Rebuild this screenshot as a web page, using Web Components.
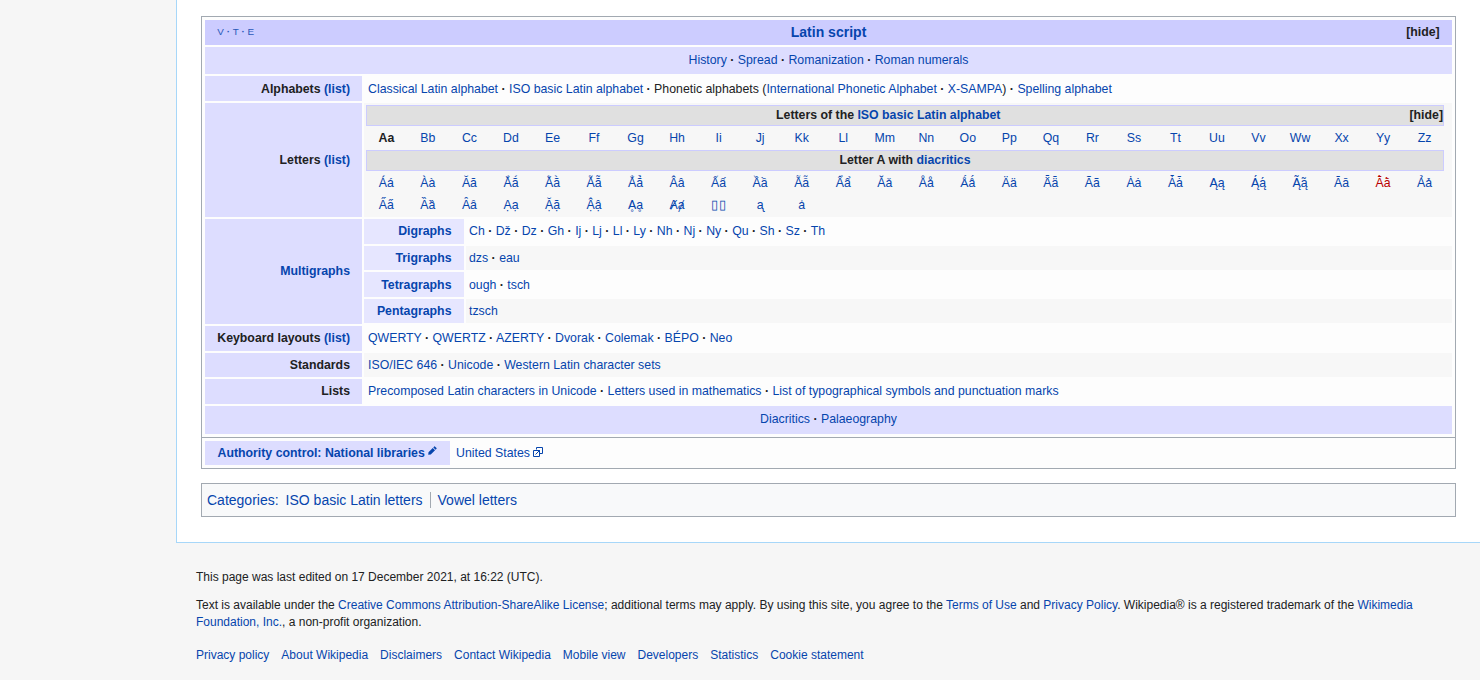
<!DOCTYPE html>
<html lang="en"><head><meta charset="utf-8"><title>Latin script</title>
<style>
html,body{margin:0;padding:0;background:#f6f6f6}
body{font-family:"Liberation Sans",Arial,sans-serif;color:#202122;width:1480px;height:680px;overflow:hidden}
a{color:#0645ad;text-decoration:none}
a.new{color:#ba0000}
b.d{color:#202122}
</style></head><body>
<wiki-page>
  <nav-box>
    <nav-title heading="Latin script"></nav-title>
    <nav-band><a>History</a> <b class="d">·</b> <a>Spread</a> <b class="d">·</b> <a>Romanization</a> <b class="d">·</b> <a>Roman numerals</a></nav-band>
    <nav-row nudge><span slot="label">Alphabets <a>(list)</a></span><a style="color:#0645ad">Classical Latin alphabet</a> <b class="d">·</b> <a>ISO basic Latin alphabet</a> <b class="d">·</b> Phonetic alphabets (<a>International Phonetic Alphabet</a> <b class="d">·</b> <a>X-SAMPA</a>) <b class="d">·</b> <a>Spelling alphabet</a></nav-row>
    <nav-row flush shade><span slot="label">Letters <a>(list)</a></span>
      <sub-head hide>Letters of the <a>ISO basic Latin alphabet</a></sub-head>
      <letter-grid id="basic"></letter-grid>
      <sub-head>Letter A with <a>diacritics</a></sub-head>
      <letter-grid id="dia" tight></letter-grid>
    </nav-row>
    <nav-row flush nested><span slot="label"><a>Multigraphs</a></span>
      <sub-row><a slot="label">Digraphs</a><a>Ch</a> <b class="d">·</b> <a>Dž</a> <b class="d">·</b> <a>Dz</a> <b class="d">·</b> <a>Gh</a> <b class="d">·</b> <a>Ij</a> <b class="d">·</b> <a>Lj</a> <b class="d">·</b> <a>Ll</a> <b class="d">·</b> <a>Ly</a> <b class="d">·</b> <a>Nh</a> <b class="d">·</b> <a>Nj</a> <b class="d">·</b> <a>Ny</a> <b class="d">·</b> <a>Qu</a> <b class="d">·</b> <a>Sh</a> <b class="d">·</b> <a>Sz</a> <b class="d">·</b> <a>Th</a></sub-row>
      <sub-row shade><a slot="label">Trigraphs</a><a>dzs</a> <b class="d">·</b> <a>eau</a></sub-row>
      <sub-row><a slot="label">Tetragraphs</a><a>ough</a> <b class="d">·</b> <a>tsch</a></sub-row>
      <sub-row shade><a slot="label">Pentagraphs</a><a>tzsch</a></sub-row>
    </nav-row>
    <nav-row><span slot="label">Keyboard layouts <a>(list)</a></span><a>QWERTY</a> <b class="d">·</b> <a>QWERTZ</a> <b class="d">·</b> <a>AZERTY</a> <b class="d">·</b> <a>Dvorak</a> <b class="d">·</b> <a>Colemak</a> <b class="d">·</b> <a>BÉPO</a> <b class="d">·</b> <a>Neo</a></nav-row>
    <nav-row shade><span slot="label">Standards</span><a>ISO/IEC 646</a> <b class="d">·</b> <a>Unicode</a> <b class="d">·</b> <a>Western Latin character sets</a></nav-row>
    <nav-row><span slot="label">Lists</span><a>Precomposed Latin characters in Unicode</a> <b class="d">·</b> <a>Letters used in mathematics</a> <b class="d">·</b> <a>List of typographical symbols and punctuation marks</a></nav-row>
    <nav-band below><a>Diacritics</a> <b class="d">·</b> <a>Palaeography</a></nav-band>
  </nav-box>
  <nav-box second><authority-row><a>United States</a></authority-row></nav-box>
  <cat-links><a>ISO basic Latin letters</a><a>Vowel letters</a></cat-links>
  <wiki-footer slot="footer">
    <p>This page was last edited on 17 December 2021, at 16:22 (UTC).</p>
    <p style="margin-top:11px">Text is available under the <a>Creative Commons Attribution-ShareAlike License</a>; additional terms may apply. By using this site, you agree to the <a>Terms of Use</a> and <a>Privacy Policy</a>. Wikipedia® is a registered trademark of the <a>Wikimedia</a></p>
    <p><a>Foundation, Inc.</a>, a non-profit organization.</p>
    <footer-links><a>Privacy policy</a><a>About Wikipedia</a><a>Disclaimers</a><a>Contact Wikipedia</a><a>Mobile view</a><a>Developers</a><a>Statistics</a><a>Cookie statement</a></footer-links>
  </wiki-footer>
</wiki-page>
<script>
function def(name, css, html, extra){
  customElements.define(name, class extends HTMLElement{
    constructor(){super();this.attachShadow({mode:'open'}).innerHTML='<style>'+css+'</style>'+html;}
    connectedCallback(){ if(extra) extra.call(this); }
  });
}
def('wiki-page',
 `:host{display:block}
  .content{margin-left:176px;border-left:1px solid #a7d7f9;border-bottom:1px solid #a7d7f9;background:#fff;padding:16px 24px 24px 24px;height:502px;box-sizing:content-box}`,
 `<div class="content"><slot></slot></div><slot name="footer"></slot>`);
def('nav-box',
 `:host{display:flex;flex-direction:column;gap:2px;border:1px solid #a2a9b1;background:#fdfdfd;padding:3px;font-size:12.32px;line-height:18.48px}
  :host([second]){margin-top:-1px}`,
 `<slot></slot>`);
def('nav-title',
 `:host{display:flex;height:24.64px;background:#ccf;align-items:center;padding:0 12.32px}
  .v,.h{width:74px;flex:none}
  .v{font-size:9.86px;color:#0645ad;opacity:.85}
  .t{flex:1;text-align:center;font-size:14.04px;font-weight:bold;color:#0645ad}
  .h{text-align:right;font-weight:bold;color:#202122}`,
 `<span class="v">V<b> · </b>T<b> · </b>E</span><span class="t"></span><span class="h">[hide]</span>`,
 function(){this.shadowRoot.querySelector('.t').textContent=this.getAttribute('heading');});
def('nav-band',
 `:host{display:flex;justify-content:center;align-items:center;height:27.76px;background:#ddf;white-space:pre-wrap;text-align:center}
  :host([below]){height:28px;box-sizing:border-box;padding-bottom:1.2px}
  div{text-align:center}`,
 `<div><slot></slot></div>`);
def('nav-row',
 `:host{display:flex;min-height:24.64px}
  .g{flex:none;box-sizing:border-box;width:157px;background:#ddf;display:flex;align-items:center;justify-content:flex-end;padding:0 12px;font-weight:bold;text-align:right}
  .l{flex:1;margin-left:2px;padding:3.08px 0 3.08px 4px;display:block;min-width:0}
  :host([nudge]) .l{padding-top:4px;padding-bottom:2.16px}
  :host([nudge]) .g{padding-top:1px}
  :host([shade]) .l{background:#f7f7f7}
  :host([flush]) .l{padding:2px 8px 1px 2px}
  :host([nested]) .l{padding:0 0 .55px;display:flex;flex-direction:column;gap:2px}`,
 `<div class="g"><slot name="label"></slot></div><div class="l"><slot></slot></div>`);
def('sub-head',
 `:host{display:flex;height:19px;border:1px solid #ccf;background:#e0e0e0;font-weight:bold;align-items:center}
  .t{flex:1;text-align:center}
  .h{display:none;color:#202122}
  :host([hide]) .h{display:block}`,
 `<span class="t"><slot></slot></span><span class="h">[hide]</span>`);
const basic="Aa Bb Cc Dd Ee Ff Gg Hh Ii Jj Kk Ll Mm Nn Oo Pp Qq Rr Ss Tt Uu Vv Ww Xx Yy Zz".split(' ');
const dia="Áá Àà Ăă Ắắ Ằằ Ẵẵ Ẳẳ Ââ Ấấ Ầầ Ẫẫ Ẩẩ Ǎǎ Åå Ǻǻ Ää Ǟǟ Ãã Ȧȧ Ǡǡ Ąą Ą́ą́ Ą̃ą̃ Āā Ā̀ā̀ Ảả A̋a̋ Ȁȁ Ȃȃ Ạạ Ặặ Ậậ Ḁḁ Ⱥⱥ ▯▯ ᶏ ẚ".split(' ');
def('letter-grid',
 `:host{display:grid;grid-template-columns:repeat(26,1fr);grid-auto-rows:24px;align-items:center;text-align:center;margin:0 -1.4px 0 -.4px}
  :host([tight]){grid-auto-rows:22px;padding-top:1px}`,
 `<slot></slot>`,
 function(){
  if(this.childElementCount) return;
  const list=this.id==='basic'?basic:dia;
  list.forEach((s,i)=>{
    const e=document.createElement(this.id==='basic'&&i===0?'b':'a');
    e.textContent=s;
    if(this.id==='dia'&&i===24) e.className='new';
    if(s==='▯▯'){e.style.fontSize='13px';e.style.letterSpacing='.5px';}
    this.appendChild(e);
  });
 });
def('sub-row',
 `:host{display:flex;height:24.6px}
  .g{flex:none;box-sizing:border-box;width:100px;background:#e6e6ff;display:flex;align-items:center;justify-content:flex-end;padding:.8px 12.5px 0;font-weight:bold}
  .l{flex:1;margin-left:2px;padding:.8px 0 0 3px;display:flex;align-items:center;white-space:pre-wrap}
  .l div{min-width:0}
  :host([shade]) .l{background:#f7f7f7}`,
 `<div class="g"><slot name="label"></slot></div><div class="l"><div><slot></slot></div></div>`);
def('authority-row',
 `:host{display:flex;height:24px;align-items:center}
  .g{box-sizing:border-box;width:245px;height:24px;background:#ddf;display:flex;align-items:center;padding-left:12.5px;font-weight:bold;color:#0645ad}
  .g svg{margin-left:3px;margin-top:-4px}
  .l{margin-left:6px;display:flex;align-items:center}
  .l svg{margin-left:3px;margin-top:-2px}`,
 `<div class="g">Authority control: National libraries<svg width="9" height="9" viewBox="0 0 11 11"><path fill="#0645ad" d="M7.6.6a.6.6 0 0 1 .85 0l1.95 1.95a.6.6 0 0 1 0 .85L9.3 4.5 6.5 1.7zM5.8 2.4l2.8 2.8-5.2 5.2L.3 10.7l.3-3.1z"/></svg></div>
  <div class="l"><slot></slot><svg width="10" height="10" viewBox="0 0 10 10" fill="none" stroke="#0645ad"><path d="M3.5 2.5V.5H9.5V6.5H7M.5 3.5H6.5V9.5H.5z"/><path d="M2.5 7.5L6.5 3.5M4 3.5H6.5V6"/></svg></div>`);
def('cat-links',
 `:host{display:block;margin-top:14px;height:32px;box-sizing:content-box;border:1px solid #a2a9b1;background:#f8f9fa;font-size:14px;line-height:32px;padding:0 5px;color:#0645ad}
  .c{margin-right:7px}
  ::slotted(a){padding:0 7px}
  ::slotted(a:first-of-type){padding-left:0}
  ::slotted(a:last-of-type){border-left:1px solid #a2a9b1}`,
 `<span class="c">Categories:</span><slot></slot>`);
def('wiki-footer',
 `:host{display:block;padding:26px 0 0 196px;width:1240px;font-size:12px;line-height:17px;color:#202122}
  ::slotted(p){margin:0;white-space:nowrap}`,
 `<slot></slot>`);
def('footer-links',
 `:host{display:flex;gap:12px;margin-top:16px;line-height:17px}`,
 `<slot></slot>`);
</script>
</body></html>
